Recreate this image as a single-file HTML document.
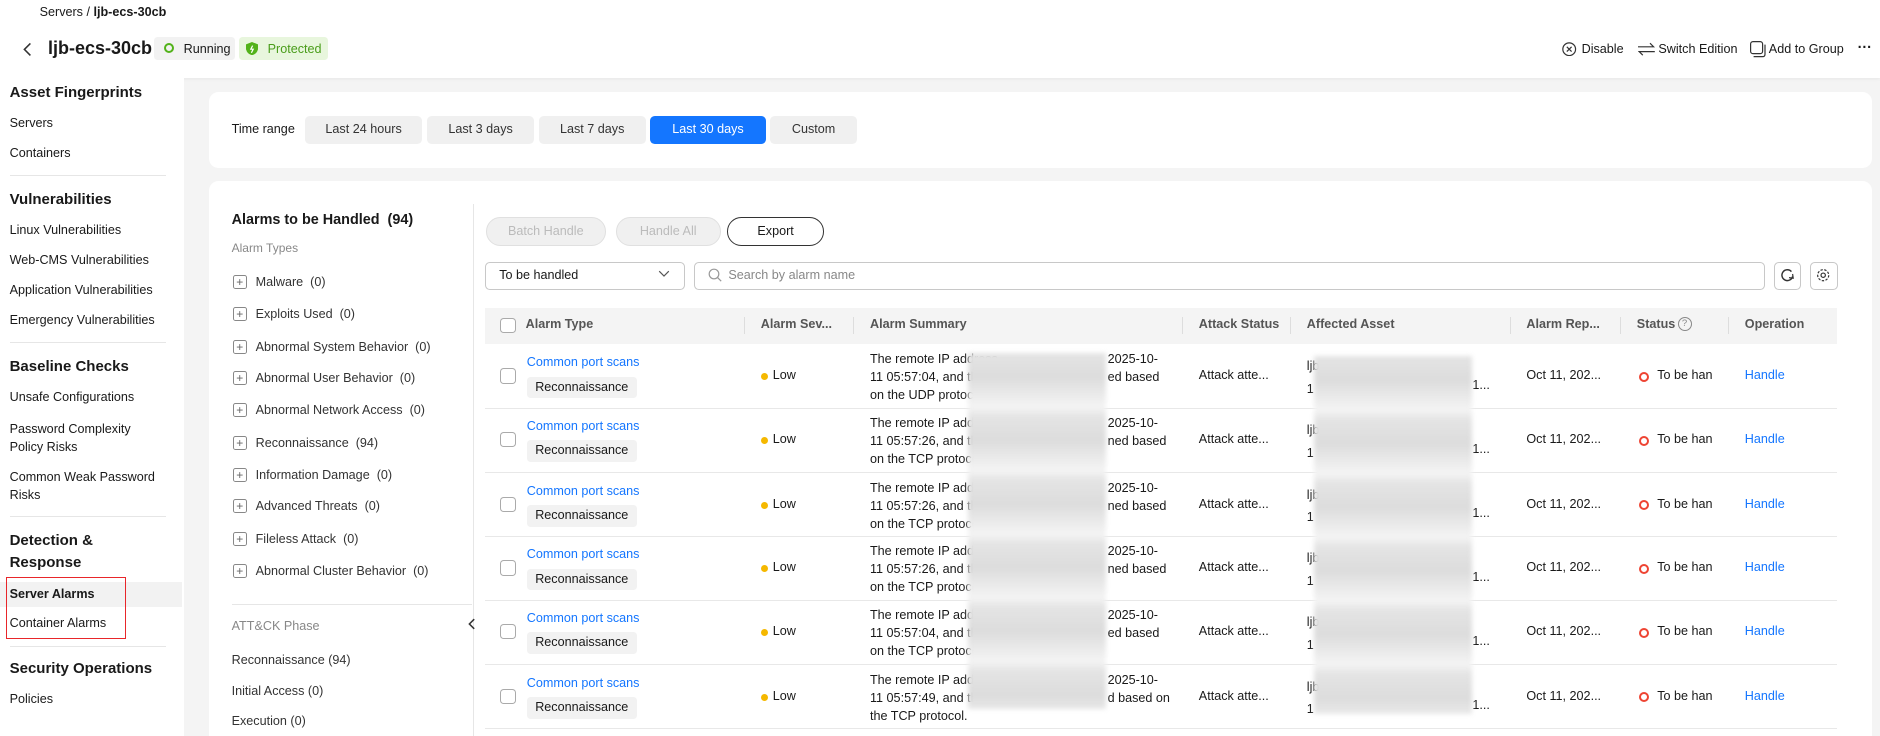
<!DOCTYPE html>
<html><head><meta charset="utf-8"><style>
html{zoom:1.2;overflow:hidden;height:613px}
body{margin:0;width:1567px;height:613px;overflow:hidden;background:#f4f4f4;font-family:"Liberation Sans",sans-serif;color:#191919;font-size:10.5px;position:relative}
.a{position:absolute;white-space:nowrap}
.hdr{position:absolute;left:0;top:0;width:1567px;height:65px;background:#fff;box-shadow:0 1px 3px rgba(0,0,0,.06)}
.side{position:absolute;left:0;top:65px;width:153px;height:548px;background:#fff}
.sh{font-weight:bold;font-size:12.5px}
.dv{position:absolute;left:8px;width:130px;height:1px;background:#e6e6e6}
.card{position:absolute;background:#fff;border-radius:8px}
.tb{position:absolute;top:97px;height:23px;line-height:23px;text-align:center;background:#f0f0f0;border-radius:4px;font-size:10.5px;color:#333}
.plus{position:absolute;width:10px;height:10px;border:1px solid #888;border-radius:2px;font-size:10px;line-height:10px;text-align:center;color:#666}
.th{position:absolute;top:264px;font-weight:bold;color:#555;font-size:10.5px}
.cd{position:absolute;top:264px;width:1px;height:14px;background:#ddd}
.cb{position:absolute;width:11px;height:11px;border:1px solid #aaa;border-radius:3px;background:#fff}
.row{position:absolute;left:404px;width:1127px;height:53px;border-bottom:1px solid #e8e8e8}
.row .a{font-size:10.5px}
.blue{color:#1476ff}
.tag{position:absolute;height:18px;line-height:18px;padding:0 7px;background:#f2f2f2;border-radius:3px}
.dot{position:absolute;width:6px;height:6px;border-radius:50%;background:#f5b800}
.ring{position:absolute;width:5px;height:5px;border:2px solid #e43;border-radius:50%}
.blur{position:absolute;background:repeating-linear-gradient(180deg,#e4e4e4 0,#dcdcdc 20px,#f4f4f4 45px,#e4e4e4 53px);filter:blur(2px)}
</style></head><body>
<div class="hdr"></div>
<div class="a" style="left:33px;top:4px;font-size:10.5px">Servers / <b>ljb-ecs-30cb</b></div>
<svg class="a" style="left:18px;top:34px" width="10" height="14"><path d="M7 2 L2 7 L7 12" fill="none" stroke="#333" stroke-width="1.3"/></svg>
<div class="a" style="left:40px;top:32px;font-size:15px;font-weight:bold">ljb-ecs-30cb</div>
<div class="a" style="left:128px;top:31px;width:68px;height:19px;background:#f2f2f2;border-radius:3px"></div>
<div class="a" style="left:137px;top:36px;width:5px;height:5px;border:2px solid #52b21a;border-radius:50%"></div>
<div class="a" style="left:153px;top:35px">Running</div>
<div class="a" style="left:199px;top:31px;width:74px;height:19px;background:#e8f6dd;border-radius:3px"></div>
<svg class="a" style="left:205px;top:35px" width="10" height="11"><path d="M5 0 L10 2 L10 6 Q9 10 5 11 Q1 10 0 6 L0 2Z" fill="#52b21a"/><path d="M5.5 3 L4 6 L6 6 L4.5 9" stroke="#fff" fill="none" stroke-width="1"/></svg>
<div class="a" style="left:223px;top:35px;color:#4a9d1a">Protected</div>
<svg class="a" style="left:1302px;top:35px" width="12" height="12"><circle cx="6" cy="6" r="5.3" fill="none" stroke="#333"/><path d="M4 4 L8 8 M8 4 L4 8" stroke="#333"/></svg>
<div class="a" style="left:1318px;top:35px">Disable</div>
<svg class="a" style="left:1365px;top:35px" width="14" height="12"><path d="M0 4 H13 L10 1 M14 8 H1 L4 11" fill="none" stroke="#333"/></svg>
<div class="a" style="left:1382px;top:35px">Switch Edition</div>
<svg class="a" style="left:1458px;top:34px" width="14" height="14"><rect x="0.5" y="0.5" width="10" height="10" rx="2" fill="none" stroke="#333"/><path d="M12.5 3 V11 Q12.5 13 10.5 13 H3" fill="none" stroke="#333"/></svg>
<div class="a" style="left:1474px;top:35px">Add to Group</div>
<div class="a" style="left:1548px;top:33px;font-size:12px;font-weight:bold">···</div>

<div class="side"></div>
<div class="a sh" style="left:8px;top:70px">Asset Fingerprints</div>
<div class="a" style="left:8px;top:97px">Servers</div>
<div class="a" style="left:8px;top:122px">Containers</div>
<div class="dv" style="top:146px"></div>
<div class="a sh" style="left:8px;top:159px">Vulnerabilities</div>
<div class="a" style="left:8px;top:186px">Linux Vulnerabilities</div>
<div class="a" style="left:8px;top:211px">Web-CMS Vulnerabilities</div>
<div class="a" style="left:8px;top:236px">Application Vulnerabilities</div>
<div class="a" style="left:8px;top:261px">Emergency Vulnerabilities</div>
<div class="dv" style="top:285px"></div>
<div class="a sh" style="left:8px;top:298px">Baseline Checks</div>
<div class="a" style="left:8px;top:325px">Unsafe Configurations</div>
<div class="a" style="left:8px;top:350px;line-height:15px">Password Complexity<br>Policy Risks</div>
<div class="a" style="left:8px;top:390px;line-height:15px">Common Weak Password<br>Risks</div>
<div class="dv" style="top:430px"></div>
<div class="a sh" style="left:8px;top:442px;line-height:18px">Detection &amp;<br>Response</div>
<div class="a" style="left:0;top:485px;width:152px;height:21px;background:#f2f2f2"></div>
<div class="a" style="left:8px;top:489px;font-weight:bold">Server Alarms</div>
<div class="a" style="left:8px;top:513px">Container Alarms</div>
<div class="a" style="left:5px;top:481px;width:98px;height:50px;border:1px solid #e8262a"></div>
<div class="dv" style="top:538px"></div>
<div class="a sh" style="left:8px;top:550px">Security Operations</div>
<div class="a" style="left:8px;top:577px">Policies</div>

<div class="card" style="left:174px;top:77px;width:1386px;height:63px"></div>
<div class="a" style="left:193px;top:102px">Time range</div>
<div class="tb" style="left:254px;width:98px">Last 24 hours</div>
<div class="tb" style="left:356px;width:89px">Last 3 days</div>
<div class="tb" style="left:449px;width:89px">Last 7 days</div>
<div class="tb" style="left:542px;width:96px;background:#1476ff;color:#fff">Last 30 days</div>
<div class="tb" style="left:642px;width:72px">Custom</div>

<div class="card" style="left:174px;top:151px;width:1386px;height:470px"></div>
<div class="a" style="left:193px;top:177px;font-weight:bold;font-size:12px">Alarms to be Handled&nbsp; (94)</div>
<div class="a" style="left:193px;top:201px;color:#888;font-size:10px">Alarm Types</div>
<div class="plus" style="left:194px;top:229px">+</div><div class="a" style="left:213px;top:229px;color:#333">Malware&nbsp; (0)</div>
<div class="plus" style="left:194px;top:256px">+</div><div class="a" style="left:213px;top:256px;color:#333">Exploits Used&nbsp; (0)</div>
<div class="plus" style="left:194px;top:283px">+</div><div class="a" style="left:213px;top:283px;color:#333">Abnormal System Behavior&nbsp; (0)</div>
<div class="plus" style="left:194px;top:309px">+</div><div class="a" style="left:213px;top:309px;color:#333">Abnormal User Behavior&nbsp; (0)</div>
<div class="plus" style="left:194px;top:336px">+</div><div class="a" style="left:213px;top:336px;color:#333">Abnormal Network Access&nbsp; (0)</div>
<div class="plus" style="left:194px;top:363px">+</div><div class="a" style="left:213px;top:363px;color:#333">Reconnaissance&nbsp; (94)</div>
<div class="plus" style="left:194px;top:390px">+</div><div class="a" style="left:213px;top:390px;color:#333">Information Damage&nbsp; (0)</div>
<div class="plus" style="left:194px;top:416px">+</div><div class="a" style="left:213px;top:416px;color:#333">Advanced Threats&nbsp; (0)</div>
<div class="plus" style="left:194px;top:443px">+</div><div class="a" style="left:213px;top:443px;color:#333">Fileless Attack&nbsp; (0)</div>
<div class="plus" style="left:194px;top:470px">+</div><div class="a" style="left:213px;top:470px;color:#333">Abnormal Cluster Behavior&nbsp; (0)</div>
<div class="a" style="left:193px;top:503px;width:200px;height:1px;background:#e6e6e6"></div>
<div class="a" style="left:193px;top:516px;color:#888">ATT&amp;CK Phase</div>
<div class="a" style="left:193px;top:544px;color:#333">Reconnaissance (94)</div>
<div class="a" style="left:193px;top:570px;color:#333">Initial Access (0)</div>
<div class="a" style="left:193px;top:595px;color:#333">Execution (0)</div>
<div class="a" style="left:394px;top:170px;width:1px;height:443px;background:#e6e6e6"></div>
<svg class="a" style="left:389px;top:515px" width="8" height="10"><path d="M6 1 L2 5 L6 9" fill="none" stroke="#333" stroke-width="1.3"/></svg>

<div class="a" style="left:405px;top:181px;width:98px;height:22px;line-height:22px;text-align:center;border:1px solid #e0e0e0;background:#f0f0f0;border-radius:12px;color:#bbb">Batch Handle</div>
<div class="a" style="left:513px;top:181px;width:86px;height:22px;line-height:22px;text-align:center;border:1px solid #e0e0e0;background:#f0f0f0;border-radius:12px;color:#bbb">Handle All</div>
<div class="a" style="left:606px;top:181px;width:79px;height:22px;line-height:22px;text-align:center;border:1px solid #333;border-radius:12px">Export</div>
<div class="a" style="left:404px;top:218px;width:165px;height:22px;border:1px solid #c8c8c8;border-radius:4px"></div>
<div class="a" style="left:416px;top:223px">To be handled</div>
<svg class="a" style="left:548px;top:225px" width="10" height="7"><path d="M1 1 L5 5 L9 1" fill="none" stroke="#555"/></svg>
<div class="a" style="left:578px;top:218px;width:891px;height:22px;border:1px solid #c8c8c8;border-radius:4px"></div>
<svg class="a" style="left:590px;top:223px" width="12" height="12"><circle cx="5" cy="5" r="4" fill="none" stroke="#999"/><path d="M8 8 L11 11" stroke="#999"/></svg>
<div class="a" style="left:607px;top:223px;color:#888">Search by alarm name</div>
<div class="a" style="left:1478px;top:218px;width:21px;height:22px;border:1px solid #c8c8c8;border-radius:4px"></div>
<svg class="a" style="left:1483px;top:223px" width="12" height="12"><path d="M9.5 3 A4.5 4.5 0 1 0 10.5 7" fill="none" stroke="#333" stroke-width="1.2"/><path d="M10.5 5 L11 8.5 L7.5 8" fill="none" stroke="#333"/></svg>
<div class="a" style="left:1508px;top:218px;width:22px;height:22px;border:1px solid #c8c8c8;border-radius:4px"></div>
<svg class="a" style="left:1513px;top:223px" width="12" height="12"><circle cx="6" cy="6" r="4.6" fill="none" stroke="#333" stroke-dasharray="2 1.2"/><circle cx="6" cy="6" r="1.8" fill="none" stroke="#333"/></svg>

<div class="a" style="left:404px;top:257px;width:1127px;height:30px;background:#f4f4f4"></div>
<div class="cb" style="left:417px;top:265px"></div>
<div class="th" style="left:438px">Alarm Type</div>
<div class="cd" style="left:620px"></div><div class="th" style="left:634px">Alarm Sev...</div>
<div class="cd" style="left:711px"></div><div class="th" style="left:725px">Alarm Summary</div>
<div class="cd" style="left:985px"></div><div class="th" style="left:999px">Attack Status</div>
<div class="cd" style="left:1075px"></div><div class="th" style="left:1089px">Affected Asset</div>
<div class="cd" style="left:1258px"></div><div class="th" style="left:1272px">Alarm Rep...</div>
<div class="cd" style="left:1350px"></div><div class="th" style="left:1364px">Status</div>
<div class="a" style="left:1398px;top:264px;width:10px;height:10px;border:1px solid #888;border-radius:50%;font-size:8px;line-height:10px;text-align:center;color:#888">?</div>
<div class="cd" style="left:1440px"></div><div class="th" style="left:1454px">Operation</div>

<div class="row" style="top:287px">
<div class="cb" style="left:13px;top:20px"></div>
<div class="a blue" style="left:35px;top:9px">Common port scans</div>
<div class="tag" style="left:35px;top:27px">Reconnaissance</div>
<div class="dot" style="left:230px;top:24px"></div><div class="a" style="left:240px;top:20px">Low</div>
<div class="a" style="left:321px;top:5px;line-height:15px">The remote IP address<br>11 05:57:04, and the<br>on the UDP protocol</div>
<div class="a" style="left:519px;top:5px;line-height:15px">2025-10-<br>ed based</div>
<div class="a" style="left:595px;top:20px">Attack atte...</div>
<div class="a" style="left:685px;top:9px;line-height:19px">ljb<br>1</div>
<div class="a" style="left:823px;top:28px">1...</div>
<div class="a" style="left:868px;top:20px">Oct 11, 202...</div>
<div class="ring" style="left:962px;top:23px"></div><div class="a" style="left:977px;top:20px;width:46px;overflow:hidden">To be handled</div>
<div class="a blue" style="left:1050px;top:20px">Handle</div>
</div>
<div class="row" style="top:340px">
<div class="cb" style="left:13px;top:20px"></div>
<div class="a blue" style="left:35px;top:9px">Common port scans</div>
<div class="tag" style="left:35px;top:27px">Reconnaissance</div>
<div class="dot" style="left:230px;top:24px"></div><div class="a" style="left:240px;top:20px">Low</div>
<div class="a" style="left:321px;top:5px;line-height:15px">The remote IP address<br>11 05:57:26, and the<br>on the TCP protocol</div>
<div class="a" style="left:519px;top:5px;line-height:15px">2025-10-<br>ned based</div>
<div class="a" style="left:595px;top:20px">Attack atte...</div>
<div class="a" style="left:685px;top:9px;line-height:19px">ljb<br>1</div>
<div class="a" style="left:823px;top:28px">1...</div>
<div class="a" style="left:868px;top:20px">Oct 11, 202...</div>
<div class="ring" style="left:962px;top:23px"></div><div class="a" style="left:977px;top:20px;width:46px;overflow:hidden">To be handled</div>
<div class="a blue" style="left:1050px;top:20px">Handle</div>
</div>
<div class="row" style="top:394px">
<div class="cb" style="left:13px;top:20px"></div>
<div class="a blue" style="left:35px;top:9px">Common port scans</div>
<div class="tag" style="left:35px;top:27px">Reconnaissance</div>
<div class="dot" style="left:230px;top:24px"></div><div class="a" style="left:240px;top:20px">Low</div>
<div class="a" style="left:321px;top:5px;line-height:15px">The remote IP address<br>11 05:57:26, and the<br>on the TCP protocol</div>
<div class="a" style="left:519px;top:5px;line-height:15px">2025-10-<br>ned based</div>
<div class="a" style="left:595px;top:20px">Attack atte...</div>
<div class="a" style="left:685px;top:9px;line-height:19px">ljb<br>1</div>
<div class="a" style="left:823px;top:28px">1...</div>
<div class="a" style="left:868px;top:20px">Oct 11, 202...</div>
<div class="ring" style="left:962px;top:23px"></div><div class="a" style="left:977px;top:20px;width:46px;overflow:hidden">To be handled</div>
<div class="a blue" style="left:1050px;top:20px">Handle</div>
</div>
<div class="row" style="top:447px">
<div class="cb" style="left:13px;top:20px"></div>
<div class="a blue" style="left:35px;top:9px">Common port scans</div>
<div class="tag" style="left:35px;top:27px">Reconnaissance</div>
<div class="dot" style="left:230px;top:24px"></div><div class="a" style="left:240px;top:20px">Low</div>
<div class="a" style="left:321px;top:5px;line-height:15px">The remote IP address<br>11 05:57:26, and the<br>on the TCP protocol</div>
<div class="a" style="left:519px;top:5px;line-height:15px">2025-10-<br>ned based</div>
<div class="a" style="left:595px;top:20px">Attack atte...</div>
<div class="a" style="left:685px;top:9px;line-height:19px">ljb<br>1</div>
<div class="a" style="left:823px;top:28px">1...</div>
<div class="a" style="left:868px;top:20px">Oct 11, 202...</div>
<div class="ring" style="left:962px;top:23px"></div><div class="a" style="left:977px;top:20px;width:46px;overflow:hidden">To be handled</div>
<div class="a blue" style="left:1050px;top:20px">Handle</div>
</div>
<div class="row" style="top:500px">
<div class="cb" style="left:13px;top:20px"></div>
<div class="a blue" style="left:35px;top:9px">Common port scans</div>
<div class="tag" style="left:35px;top:27px">Reconnaissance</div>
<div class="dot" style="left:230px;top:24px"></div><div class="a" style="left:240px;top:20px">Low</div>
<div class="a" style="left:321px;top:5px;line-height:15px">The remote IP address<br>11 05:57:04, and the<br>on the TCP protocol</div>
<div class="a" style="left:519px;top:5px;line-height:15px">2025-10-<br>ed based</div>
<div class="a" style="left:595px;top:20px">Attack atte...</div>
<div class="a" style="left:685px;top:9px;line-height:19px">ljb<br>1</div>
<div class="a" style="left:823px;top:28px">1...</div>
<div class="a" style="left:868px;top:20px">Oct 11, 202...</div>
<div class="ring" style="left:962px;top:23px"></div><div class="a" style="left:977px;top:20px;width:46px;overflow:hidden">To be handled</div>
<div class="a blue" style="left:1050px;top:20px">Handle</div>
</div>
<div class="row" style="top:554px">
<div class="cb" style="left:13px;top:20px"></div>
<div class="a blue" style="left:35px;top:9px">Common port scans</div>
<div class="tag" style="left:35px;top:27px">Reconnaissance</div>
<div class="dot" style="left:230px;top:24px"></div><div class="a" style="left:240px;top:20px">Low</div>
<div class="a" style="left:321px;top:5px;line-height:15px">The remote IP address<br>11 05:57:49, and the<br>the TCP protocol.</div>
<div class="a" style="left:519px;top:5px;line-height:15px">2025-10-<br>d based on</div>
<div class="a" style="left:595px;top:20px">Attack atte...</div>
<div class="a" style="left:685px;top:9px;line-height:19px">ljb<br>1</div>
<div class="a" style="left:823px;top:28px">1...</div>
<div class="a" style="left:868px;top:20px">Oct 11, 202...</div>
<div class="ring" style="left:962px;top:23px"></div><div class="a" style="left:977px;top:20px;width:46px;overflow:hidden">To be handled</div>
<div class="a blue" style="left:1050px;top:20px">Handle</div>
</div>

<div class="blur" style="left:807px;top:294px;width:115px;height:297px"></div>
<div class="blur" style="left:1095px;top:297px;width:132px;height:298px"></div>
</body></html>
